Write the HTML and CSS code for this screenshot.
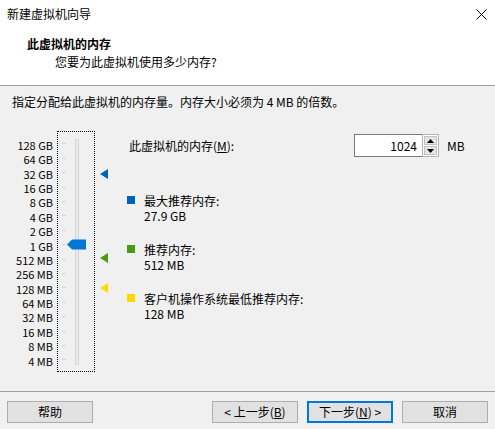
FILE: index.html
```html
<!DOCTYPE html>
<html lang="zh-CN">
<head>
<meta charset="utf-8">
<title>新建虚拟机向导</title>
<link rel="stylesheet" href="styles.css">
</head>
<body>
<div class="page">
  <div class="top">
    <div class="titlebar">
      <span class="title">新建虚拟机向导</span>
      <svg class="close" width="11" height="11" viewBox="0 0 11 11"><path d="M0.5 0.5 L10.5 10.5 M10.5 0.5 L0.5 10.5" stroke="#000" stroke-width="1" fill="none"/></svg>
    </div>
    <div class="heading">此虚拟机的内存</div>
    <div class="subtitle">您要为此虚拟机使用多少内存?</div>
  </div>
  <div class="main">
    <div class="instr">指定分配给此虚拟机的内存量。内存大小必须为 4 MB 的倍数。</div>
    <div class="content">
      <div class="labels">
        <div class="lbl">128 GB</div><div class="lbl">64 GB</div><div class="lbl">32 GB</div><div class="lbl">16 GB</div>
        <div class="lbl">8 GB</div><div class="lbl">4 GB</div><div class="lbl">2 GB</div><div class="lbl">1 GB</div>
        <div class="lbl">512 MB</div><div class="lbl">256 MB</div><div class="lbl">128 MB</div><div class="lbl">64 MB</div>
        <div class="lbl">32 MB</div><div class="lbl">16 MB</div><div class="lbl">8 MB</div><div class="lbl">4 MB</div>
      </div>
      <div class="sliderbox">
        <div class="ticks">
          <i></i><i></i><i></i><i></i><i></i><i></i><i></i><i></i>
          <i></i><i></i><i></i><i></i><i></i><i></i><i></i><i></i>
        </div>
        <div class="track"></div>
        <svg class="thumb" width="19" height="11" viewBox="0 0 19 11"><polygon points="0,5.5 5,0.5 19,0.5 19,10.5 5,10.5" fill="#0078d7"/></svg>
      </div>
      <div class="markers">
        <svg class="mk mk-max" width="8" height="10" viewBox="0 0 8 10"><polygon points="0,5 8,0 8,10" fill="#0063b1"/></svg>
        <svg class="mk mk-rec" width="8" height="10" viewBox="0 0 8 10"><polygon points="0,5 8,0 8,10" fill="#4a9a12"/></svg>
        <svg class="mk mk-min" width="8" height="10" viewBox="0 0 8 10"><polygon points="0,5 8,0 8,10" fill="#ffd800"/></svg>
      </div>
      <div class="right">
        <div class="memrow">
          <div class="memlabel">此虚拟机的内存(<u>M</u>):</div>
          <div class="spinbox">
            <div class="num">1024</div>
            <div class="spin">
              <div class="sb"><svg width="7" height="4" viewBox="0 0 7 4"><polygon points="0,4 3.5,0 7,4" fill="#000"/></svg></div>
              <div class="sb"><svg width="7" height="4" viewBox="0 0 7 4"><polygon points="0,0 7,0 3.5,4" fill="#000"/></svg></div>
            </div>
          </div>
          <div class="unit">MB</div>
        </div>
        <div class="legend">
          <div class="item">
            <span class="sq sq-max"></span>
            <div class="itext"><div>最大推荐内存:</div><div>27.9 GB</div></div>
          </div>
          <div class="item">
            <span class="sq sq-rec"></span>
            <div class="itext"><div>推荐内存:</div><div>512 MB</div></div>
          </div>
          <div class="item">
            <span class="sq sq-min"></span>
            <div class="itext"><div>客户机操作系统最低推荐内存:</div><div>128 MB</div></div>
          </div>
        </div>
      </div>
    </div>
  </div>
  <div class="footer">
    <button class="btn">帮助</button>
    <button class="btn prev">&lt; 上一步(<u>B</u>)</button>
    <button class="btn default">下一步(<u>N</u>) &gt;</button>
    <button class="btn">取消</button>
  </div>
</div>
</body>
</html>
```
FILE: styles.css
```css
html, body {
  margin: 0;
  padding: 0;
}
body {
  background: #f0f0f0;
  font-family: "Noto Sans CJK SC", "Noto Sans", sans-serif;
  font-size: 12px;
  color: #000;
  overflow: hidden;
}
.page {
  width: 495px;
  height: 429px;
  display: flex;
  flex-direction: column;
}
.top {
  background: #fff;
  height: 85px;
  border-bottom: 1px solid #a0a0a0;
  flex: none;
}
.titlebar {
  height: 27px;
  display: flex;
  align-items: center;
  justify-content: space-between;
  padding: 0 8px 0 7px;
  line-height: 27px;
}
.close {
  display: block;
  margin-top: 1px;
}
.heading {
  margin: 8px 0 0 27px;
  font-weight: bold;
  line-height: 18px;
}
.subtitle {
  margin-left: 55px;
  line-height: 18px;
}
.main {
  flex: 1;
  padding-top: 7px;
}
.instr {
  padding-left: 12px;
  line-height: 18px;
}
.content {
  display: flex;
  margin-top: 20px;
}
.labels {
  width: 53px;
  margin-right: 4px;
  padding-top: 6.8px;
  text-align: right;
  font-size: 11px;
}
.lbl {
  height: 14.4px;
  line-height: 14.4px;
  white-space: nowrap;
}
.sliderbox {
  position: relative;
  width: 36px;
  height: 239px;
  border: 1px dotted #000;
  display: flex;
  flex: none;
}
.ticks {
  margin-left: 4px;
  padding-top: 4.8px;
  width: 4px;
  display: flex;
  flex-direction: column;
}
.ticks i {
  display: block;
  height: 14.4px;
  flex: none;
  background: linear-gradient(#d4d4d4, #d4d4d4) center / 4px 1px no-repeat;
}
.track {
  margin-left: 9px;
  margin-top: 7px;
  width: 2px;
  height: 224px;
  border: 1px solid #d6d6d6;
  background: #e7eaea;
}
.thumb {
  position: absolute;
  left: 9px;
  top: 107px;
  display: block;
}
.markers {
  position: relative;
  width: 32px;
  flex: none;
}
.mk {
  position: absolute;
  left: 5px;
  display: block;
}
.mk-max { top: 38px; }
.mk-rec { top: 122px; }
.mk-min { top: 152px; }
.right {
  display: flex;
  flex-direction: column;
}
.memrow {
  margin-top: 3px;
  height: 23px;
  display: flex;
  align-items: center;
}
.memlabel {
  width: 225px;
  padding-left: 2px;
  line-height: 18px;
}
.spinbox {
  display: flex;
  height: 23px;
}
.num {
  width: 62px;
  height: 21px;
  border: 1px solid #7a7a7a;
  border-right: none;
  background: #fff;
  text-align: right;
  padding-right: 5px;
  line-height: 21px;
}
.spin {
  width: 17px;
  height: 23px;
  box-sizing: border-box;
  border: 1px solid #b4b4b4;
  background: #fff;
  display: flex;
  flex-direction: column;
  padding: 1px;
  gap: 1px;
}
.sb {
  flex: 1;
  background: #e5e5e5;
  border: 1px solid #c2c2c2;
  display: flex;
  align-items: center;
  justify-content: center;
}
.sb svg {
  display: block;
}
.unit {
  margin-left: 8px;
  line-height: 18px;
}
.legend {
  margin-top: 35.5px;
  display: flex;
  flex-direction: column;
  gap: 19px;
}
.item {
  display: flex;
  align-items: flex-start;
}
.sq {
  width: 8px;
  height: 8px;
  margin-top: 3.5px;
  margin-right: 9px;
  flex: none;
}
.sq-max { background: #0063b1; }
.sq-rec { background: #4a9a12; }
.sq-min { background: #ffd800; }
.itext {
  line-height: 15px;
}
.footer {
  flex: none;
  height: 38px;
  border-top: 1px solid #a0a0a0;
  display: flex;
  align-items: flex-start;
  padding: 9px 7px 0 7px;
  box-sizing: border-box;
  gap: 9px;
}
.btn {
  width: 86px;
  height: 22px;
  box-sizing: border-box;
  border: 1px solid #adadad;
  background: #e1e1e1;
  font-family: "Noto Sans CJK SC", "Noto Sans", sans-serif;
  font-size: 12px;
  color: #000;
  padding: 0;
  line-height: 18px;
}
.prev {
  margin-left: auto;
}
.default {
  border: 2px solid #0078d7;
}
```
